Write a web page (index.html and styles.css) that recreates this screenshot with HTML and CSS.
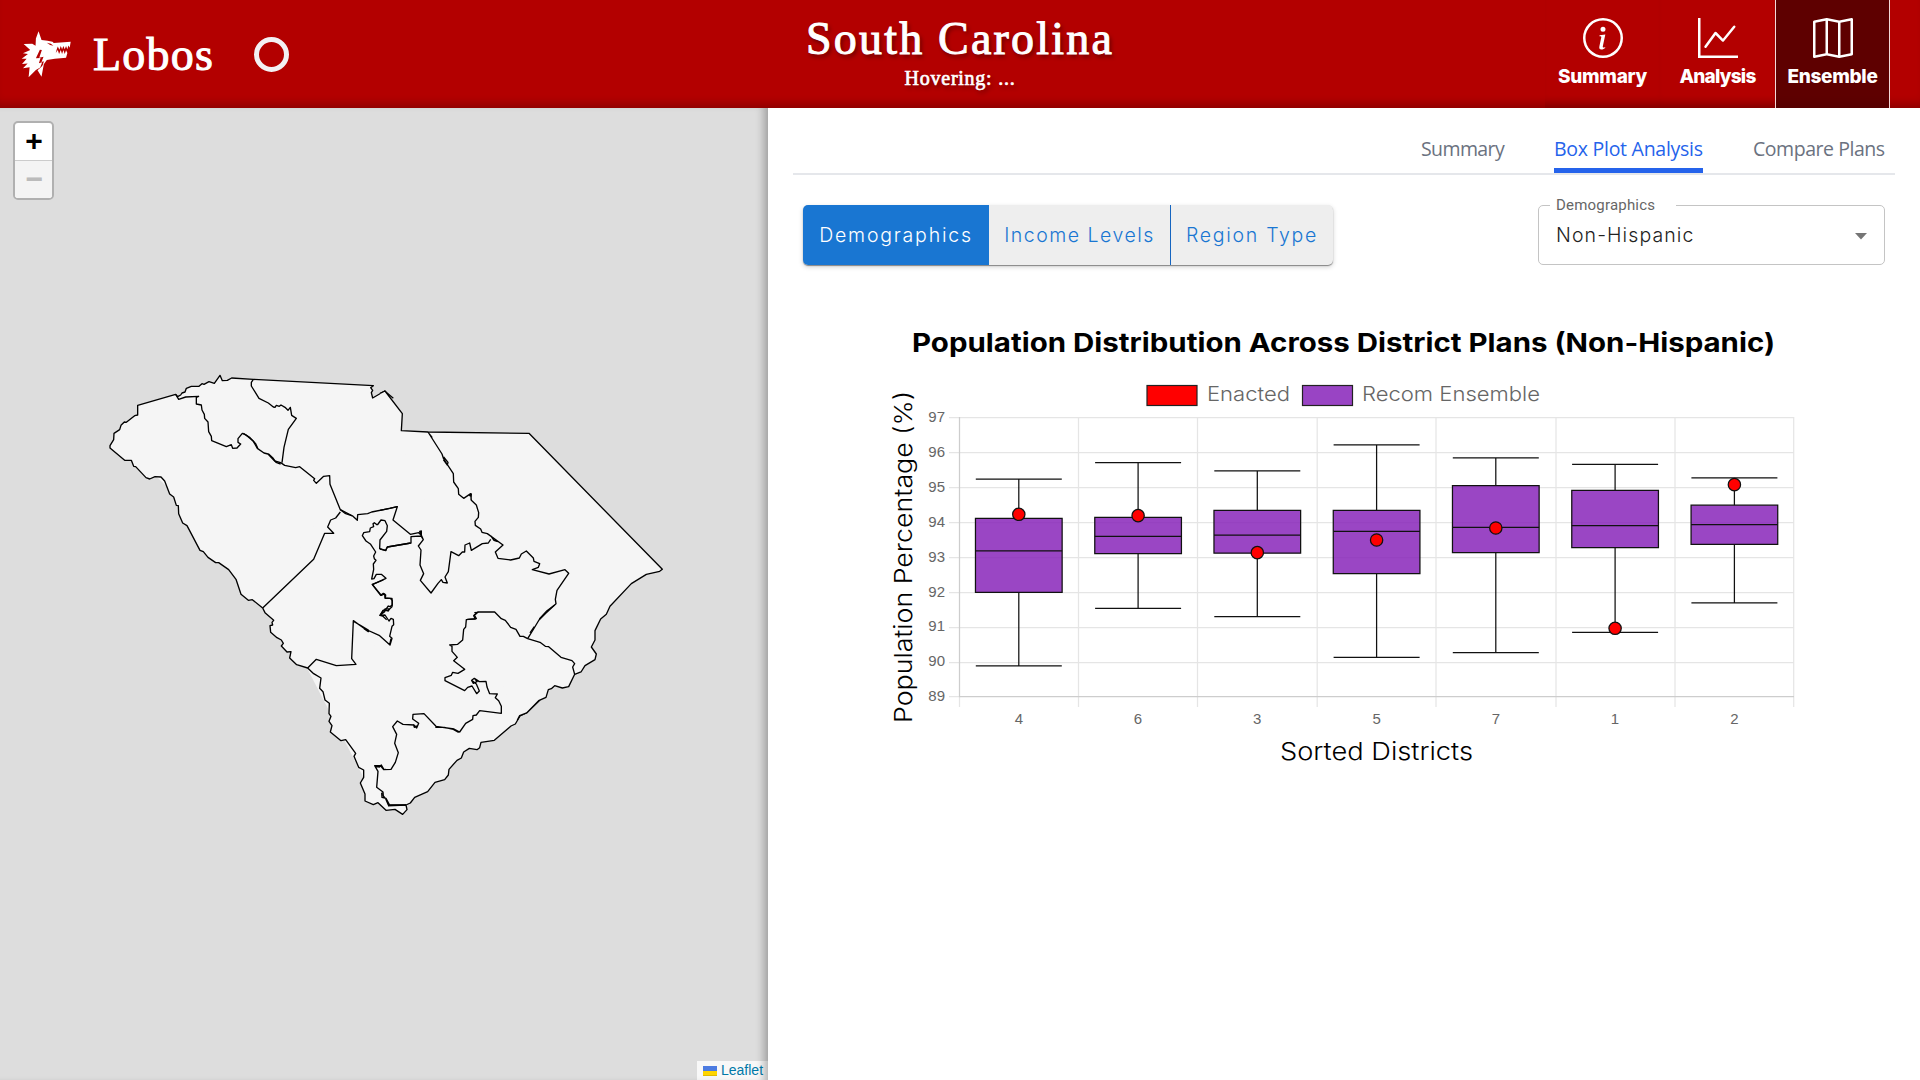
FILE: index.html
```html
<!DOCTYPE html>
<html lang="en">
<head>
<meta charset="utf-8">
<title>Lobos</title>
<link rel="stylesheet" href="styles.css">
</head>
<body>
<header class="header">
  <div class="brand">
    <svg class="wolf" viewBox="60 88 160 150" fill="#fff"><path d="M116 94L125 121L143 123L158 126L162 130L213 126L210 144L206 137L203 149L199 139L195 149L191 139L187 149L183 139L179 150L174 140L171 149L168 160L174 151L178 163L183 151L187 163L191 151L195 163L199 152L203 160L199 174L165 177L141 181L128 199L132 185L125 187L131 171L118 174L126 151L120 150L108 176L122 175L117 191L127 188L121 204L108 211L86 233L89 203L69 206L83 192L66 193L80 177L65 177L84 163L69 161L91 151L71 133L97 132L107 138L108 116Z"/><path d="M132 193L125 232L113 212L124 202Z"/><path d="M141 129L153 132L161 138L151 136Z" fill="#b30000"/></svg>
    <span class="brand-name">Lobos</span>
    <span class="ring"></span>
  </div>
  <div class="heading">
    <h1>South Carolina</h1>
    <p>Hovering: ...</p>
  </div>
  <nav class="nav">
    <a class="nav-item"><svg viewBox="0 0 16 16"><path d="M8 15A7 7 0 1 1 8 1a7 7 0 0 1 0 14m0 1A8 8 0 1 0 8 0a8 8 0 0 0 0 16"/><path d="m8.93 6.588-2.29.287-.082.38.45.083c.294.07.352.176.288.469l-.738 3.468c-.194.897.105 1.319.808 1.319.545 0 1.178-.252 1.465-.598l.088-.416c-.2.176-.492.246-.686.246-.275 0-.375-.193-.304-.533zM9 4.5a1 1 0 1 1-2 0 1 1 0 0 1 2 0"/></svg><span class="l-sum">Summary</span></a>
    <a class="nav-item"><svg viewBox="0 0 16 16"><path fill-rule="evenodd" d="M0 0h1v15h15v1H0zm14.817 3.113a.5.5 0 0 1 .07.704l-4.5 5.5a.5.5 0 0 1-.74.037L7.06 6.767l-3.656 5.027a.5.5 0 0 1-.808-.588l4-5.5a.5.5 0 0 1 .758-.06l2.609 2.61 4.15-5.073a.5.5 0 0 1 .704-.07"/></svg><span class="l-ana">Analysis</span></a>
    <a class="nav-item active"><svg viewBox="0 0 16 16"><path fill-rule="evenodd" d="M15.817.113A.5.5 0 0 1 16 .5v14a.5.5 0 0 1-.402.49l-5 1a.5.5 0 0 1-.196 0L5.5 15.01l-4.902.98A.5.5 0 0 1 0 15.5v-14a.5.5 0 0 1 .402-.49l5-1a.5.5 0 0 1 .196 0L10.5.99l4.902-.98a.5.5 0 0 1 .415.103M10 1.91l-4-.8v12.98l4 .8zm1 12.98 4-.8V1.11l-4 .8zm-6-.8V1.11l-4 .8v12.98z"/></svg><span class="l-ens">Ensemble</span></a>
  </nav>
</header>
<main class="main">
  <section class="map">
    <svg class="districts" viewBox="0 108 768 972" width="768" height="972">
      <path class="land" d="M120 440L250 385L380 400L410 440L525 440L640 570L570 655L420 770L370 790L307 668L262 607L240 560Z"/>
      <!-- coast and state outline -->
      <g transform="translate(240 580) scale(.33333)">
        <path class="area" d="M68 84L75 98L101 121L96 127L98 135L90 137L92 157L111 173L124 180L130 190L124 198L141 216L153 215L149 234L170 254L203 264L221 281L243 294L239 325L249 335L255 360L268 370L267 401L273 409L267 424L276 437L271 456L303 482L317 479L347 520L342 529L356 562L371 570L371 592L361 609L375 642L375 663L400 674L414 668L438 691L465 688L488 703L501 689L498 675L511 669L524 652L563 635L585 607L614 599L625 585L627 568L651 541L664 534L671 516L688 505L711 509L719 503L723 487L763 481L813 438L826 432L840 408L859 399L900 360"/>
      </g>
      <g transform="translate(90 360) scale(.33333)">
        <path class="area" d="M910 115L884 93L848 114L844 98L848 91L842 83L850 77L490 58L425 54L412 61L397 62L390 46L373 70L357 65L342 73L336 71L327 79L304 79L289 85L285 96L276 99L272 105L263 110L257 103L143 136L143 165L134 167L109 187L103 186L93 196L89 209L72 220L71 239L60 257L60 264L104 301L124 301L131 319L137 320L168 353L179 357L195 350L213 351L224 363L239 402L251 411L259 436L265 437L266 461L278 489L291 497L330 571L340 575L354 592L377 608L386 608L416 629L438 658L453 703L475 721L487 719L518 744"/>
      </g>
      <g transform="translate(380 360) scale(.33333)">
        <path class="area" d="M0 100L15 93L67 161L64 212L144 216L447 220L847 628L839 634L799 643L754 671L690 739L679 763L662 777L645 812L645 840L634 861L649 882L645 899L615 917L603 936L584 943L566 980L547 984L524 977L514 986L505 989L498 1012L476 1022L440 1059L419 1067L412 1080"/>
      </g>
      <!-- north-west districts -->
      <g transform="translate(90 360) scale(.33333)">
        <path class="border" d="M257 103L266 118L287 111L326 109L319 112L319 132L334 135L336 150L343 163L344 175L354 186L356 215L364 229L365 242L409 260L424 254L428 265L441 264L452 252L444 247L444 236L457 220L468 225L490 244L502 265L522 279L534 282L554 303L572 308L584 316L617 323L629 320L674 356L671 361L679 370L701 349L719 347L720 373L751 449L788 468L802 481L803 464L833 461L845 456L900 445L922 440"/>
        <path class="border" d="M490 58L484 67L484 78L507 115L535 129L550 141L555 142L559 136L568 139L573 135L585 142L594 151L601 142L605 166L619 175L595 208L582 262L576 308M535 281L548 293L558 307L572 312M460 220L480 233L497 251L503 264M751 449L765 460L787 468M751 456L737 474L722 480L713 501L731 520L704 520L671 598L518 744"/>
        <path class="border" d="M862 495L853 488L849 491L851 500L841 504L839 515L821 518L817 527L828 543L842 553L857 576L851 588L853 596L858 601L850 612L851 628L845 657L852 656L859 643L874 643L888 655L847 674L872 706L880 700L887 705L886 715L906 715L907 735L900 740L895 738L887 749L879 751L870 766L878 768L890 779M862 495L873 480L885 482L892 497L890 514L870 540L869 566L887 572L892 561L962 549"/>
      </g>
      <!-- eastern districts -->
      <g transform="translate(380 360) scale(.33333)">
        <path class="border" d="M144 216L186 282L191 297L220 341L221 366L235 386L236 403L251 415L272 401L274 421L289 435L296 458L295 472L285 484L286 496L302 507L306 517L322 521L369 555L346 576L354 595L392 600L418 594L424 582L439 573L460 594L462 604L479 611L475 622L457 629L507 642L555 629L566 640L531 691L526 718L528 731L498 759L477 780L459 810L443 836M148 222L157 233M191 291L204 307L202 315L190 299M268 408L274 402L273 419M333 528L342 541L353 545M332 538L325 549L307 551L274 571L269 549L255 555L254 576L247 576L236 587L213 575L205 635L195 651L202 669L189 667L184 659L174 670L153 699L121 661L131 641L120 615L123 570L115 558L130 539L119 514L124 513L124 526L116 518L91 523L39 480L52 440L0 451M130 539L123 528L93 530L93 549L22 561L17 571L0 567"/>
        <path class="border" d="M443 836L430 829L420 829L408 808L392 802L376 781L364 776L344 756L294 756L281 767L286 777L262 778M443 836L480 847L496 859L506 860L543 892L576 902L584 911L578 921L584 943M478 777L501 752L524 735M450 819L463 800"/>
      </g>
      <!-- southern districts -->
      <g transform="translate(240 580) scale(.33333)">
        <path class="border" d="M203 264L229 238L289 257L348 253L335 236L340 122L375 147L419 167L450 195L456 175L449 169L456 139L461 134L460 118L453 115L447 123L435 105L420 106L431 91L443 92L456 80L457 62L451 55L435 54L434 42L424 46L397 13L430 0M341 124L385 150L385 155L372 146M422 104L434 95L435 87L450 86L443 95M449 195L453 176"/>
        <path class="border" d="M703 98L714 97L703 105L709 116L679 119L677 141L671 148L668 180L653 193L629 195L636 199L636 214L652 232L641 242L674 268L654 280L638 277L634 286L615 293L615 302L674 332L683 322L696 318L710 341L718 333L709 312L695 301L703 295L718 305L738 304L741 321L749 341L772 342L766 353L776 362L784 379L784 400L719 392L709 405L699 407L698 418L677 430L659 456L642 447L588 439L552 401L519 403L518 417L536 430L530 444L522 435L489 433L472 423L458 440L470 463L464 490L475 518L466 547L453 568L431 569L421 557L404 557L414 574L410 622L429 636L430 648L437 656L445 675L498 675M694 300L700 310L711 305L704 296M586 442L613 442L640 448L656 457M406 558L418 561L424 555L432 569L438 568M425 638L426 652L438 655L448 674M520 433L523 442L533 437"/>
        <path class="border base" d="M444 677L498 675"/>
      </g>
    </svg>
    <div class="zoom"><div>+</div><div class="off">−</div></div>
    <div class="attribution"><svg width="14" height="10" viewBox="0 0 14 10"><path fill="#4c7be1" d="M0 0h14v5H0z"/><path fill="#ffd500" d="M0 5h14v4H0z"/><path fill="#e0bc00" d="M0 9h14v1H0z"/></svg><span>Leaflet</span></div>
  </section>
  <section class="panel">
    <div class="tabs"><span class="tab t1">Summary</span><span class="tab t2 selected">Box Plot Analysis</span><span class="tab t3">Compare Plans</span></div>
    <div class="controls">
      <div class="group"><button class="on">Demographics</button><button class="mid">Income Levels</button><button class="last">Region Type</button></div>
      <div class="select"><span class="select-label">Demographics</span><span class="value">Non-Hispanic</span><svg width="12" height="7" viewBox="0 0 12 7"><path d="M0 0h12L6 6.5z" fill="#757575"/></svg></div>
    </div>
    <svg class="chart" viewBox="880 310 930 470" width="930" height="470">
      <text class="title" x="912" y="352" textLength="863" lengthAdjust="spacingAndGlyphs">Population Distribution Across District Plans (Non-Hispanic)</text>
      <g class="key"><rect x="1147" y="385.5" width="50" height="20" fill="#f00"/><rect x="1302.5" y="385.5" width="50" height="20" fill="#9944c4"/></g>
      <text class="legend" x="1207" y="401" textLength="83" lengthAdjust="spacingAndGlyphs">Enacted</text>
      <text class="legend" x="1362" y="401" textLength="178" lengthAdjust="spacingAndGlyphs">Recom Ensemble</text>
      <path class="grid" d="M949 417.5H1794M949 452.5H1794M949 487.5H1794M949 522.5H1794M949 557.5H1794M949 592.5H1794M949 627.5H1794M949 662.5H1794M949 696.5H1794M959.5 417V707M1078.5 417V707M1197.5 417V707M1317.2 417V707M1436 417V707M1556 417V707M1675 417V707M1793.7 417V707"/>
      <path class="grid" d="M959.5 417V697M959 696.5H1794"/>
      <g class="tick end">
        <text x="945" y="422">97</text><text x="945" y="457">96</text><text x="945" y="492">95</text><text x="945" y="527">94</text><text x="945" y="562">93</text><text x="945" y="597">92</text><text x="945" y="631">91</text><text x="945" y="666">90</text><text x="945" y="701">89</text>
      </g>
      <g class="tick center">
        <text x="1018.8" y="724">4</text><text x="1138" y="724">6</text><text x="1257.2" y="724">3</text><text x="1376.6" y="724">5</text><text x="1495.8" y="724">7</text><text x="1615" y="724">1</text><text x="1734.4" y="724">2</text>
      </g>
      <text class="axis" x="1280" y="760" textLength="193" lengthAdjust="spacingAndGlyphs">Sorted Districts</text>
      <text class="axis" transform="translate(912 723) rotate(-90)" textLength="332" lengthAdjust="spacingAndGlyphs">Population Percentage (%)</text>
      <g class="plot">
        <g transform="translate(1018.8 370) scale(.33333)"><path d="M-129 327.5H129M0 327.5V445M0 667V888M-129 888H129"/><path class="box" d="M-130 445H130V667H-130Z"/><path d="M-130 543H130"/><circle cy="433" r="18.5"/></g>
        <g transform="translate(1138.1 370) scale(.33333)"><path d="M-129 278H129M0 278V442M0 551V715M-129 715H129"/><path class="box" d="M-130 442H130V551H-130Z"/><path d="M-130 499H130"/><circle cy="437" r="18.5"/></g>
        <g transform="translate(1257.3 370) scale(.33333)"><path d="M-129 303H129M0 303V421.5M0 549.5V740M-129 740H129"/><path class="box" d="M-130 421.5H130V549.5H-130Z"/><path d="M-130 495.5H130"/><circle cy="548" r="18.5"/></g>
        <g transform="translate(1376.6 370) scale(.33333)"><path d="M-129 224.5H129M0 224.5V421.5M0 611V862M-129 862H129"/><path class="box" d="M-130 421.5H130V611H-130Z"/><path d="M-130 484.5H130"/><circle cy="510" r="18.5"/></g>
        <g transform="translate(1495.8 370) scale(.33333)"><path d="M-129 264H129M0 264V347M0 548V848M-129 848H129"/><path class="box" d="M-130 347H130V548H-130Z"/><path d="M-130 472H130"/><circle cy="474" r="18.5"/></g>
        <g transform="translate(1615.1 370) scale(.33333)"><path d="M-129 283.5H129M0 283.5V361M0 533V787M-129 787H129"/><path class="box" d="M-130 361H130V533H-130Z"/><path d="M-130 467H130"/><circle cy="775" r="18.5"/></g>
        <g transform="translate(1734.4 370) scale(.33333)"><path d="M-129 323.5H129M0 323.5V405.5M0 523V699M-129 699H129"/><path class="box" d="M-130 405.5H130V523H-130Z"/><path d="M-130 464H130"/><circle cy="344" r="18.5"/></g>
      </g>
    </svg>
  </section>
</main>
</body>
</html>
```
FILE: styles.css
```css
* { box-sizing: border-box; }
body { margin: 0; width: 1920px; height: 1080px; overflow: hidden; background: #fff; font-family: Inter, sans-serif; }
.header { display: grid; grid-template-columns: 1fr 400px 1fr; height: 108px; background: #b30000; color: #fff; box-shadow: inset 0 -10px 10px -6px rgba(0,0,0,.22); }
.brand { display: flex; align-items: center; padding-left: 20px; font-family: "Liberation Serif", serif; }
.wolf { width: 53px; height: 50px; }
.brand-name { margin: 2px 0 0 20px; width: 119px; font-size: 46px; line-height: 50px; letter-spacing: 1.2px; -webkit-text-stroke: 1px #fff; }
.ring { width: 35px; height: 35px; margin-left: 42px; border: 5px solid #f3f0f3; border-radius: 50%; }
.heading { display: flex; flex-direction: column; align-items: center; padding-top: 12px; font-family: "Liberation Serif", serif; text-shadow: 2px 3px 4px rgba(0,0,0,.45); }
.heading h1 { margin: 0; font-size: 46px; line-height: 54px; font-weight: 400; letter-spacing: 2.2px; -webkit-text-stroke: 1px #fff; white-space: nowrap; }
.heading p { margin: 0; font-size: 20px; line-height: 24px; letter-spacing: .75px; -webkit-text-stroke: .7px #fff; }
.nav { display: flex; justify-content: flex-end; padding-right: 30px; }
.nav-item { display: flex; flex-direction: column; align-items: center; width: 115px; height: 108px; padding-top: 18px; font-size: 19px; font-weight: 800; line-height: 24px; box-shadow: inset 0 -10px 10px -6px rgba(0,0,0,.1); }
.nav-item svg { width: 40px; height: 40px; fill: #fff; margin-bottom: 7px; }
.nav-item.active { background: #5e0000; border-left: 1px solid #f3d8d8; border-right: 1px solid #f3d8d8; }
.l-sum { letter-spacing: -.3px; }
.l-ana { letter-spacing: -.8px; }
.l-ens { letter-spacing: -.3px; }
.main { display: flex; height: 972px; }
.map { position: relative; width: 768px; background: #ddd; overflow: hidden; }
.map::after { content: ""; position: absolute; inset: 0; pointer-events: none; box-shadow: inset -9px 0 8px -5px rgba(0,0,0,.28); }
.districts { display: block; }
.land { fill: #f5f5f5; }
.area { fill: #f5f5f5; stroke: #000; stroke-width: 4; stroke-linejoin: round; }
.border { fill: none; stroke: #000; stroke-width: 4; stroke-linejoin: round; }
.base { stroke-width: 5; }
.zoom { position: absolute; left: 13px; top: 13px; width: 41px; height: 79px; border: 2px solid #b0b0b0; border-radius: 5px; background: #fff; overflow: hidden; font: bold 30px/40px "Liberation Mono", monospace; text-align: center; }
.zoom div { height: 37px; padding-left: 1px; }
.zoom .off { height: 38px; border-top: 1px solid #ccc; background: #f4f4f4; color: #bbb; }
.attribution { position: absolute; right: 0; bottom: 0; display: flex; align-items: center; gap: 4px; width: 71px; height: 19px; padding-left: 6px; background: rgba(255,255,255,.8); color: #0078a8; font: 14px/19px "Liberation Sans", sans-serif; }
.panel { width: 1152px; padding: 0 25px; }
.tabs { display: flex; justify-content: flex-end; gap: 50px; height: 67px; padding: 25px 10px 0 0; border-bottom: 2px solid #e5e7eb; font: 19.5px/32px "Open Sans", "Noto Sans", sans-serif; color: #6b7280; }
.tab { height: 40px; white-space: nowrap; }
.t1 { width: 83px; letter-spacing: -.6px; }
.t2 { width: 149px; letter-spacing: -.27px; }
.t3 { width: 132px; letter-spacing: -.45px; }
.selected { color: #2563eb; border-bottom: 5px solid #2563eb; }
.controls { display: flex; justify-content: space-between; padding: 30px 10px 0; }
.group { display: flex; width: 530px; height: 60px; border-radius: 5px; background: #eee; box-shadow: 0 1px 1px rgba(0,0,0,.4), 0 2px 5px rgba(0,0,0,.18); }
.group button { padding: 0; border: 0; background: none; color: #1976d2; font: 300 19.5px/24px Inter, sans-serif; }
.group .on { width: 186px; border-radius: 5px 0 0 5px; background: #1976d2; color: #fff; letter-spacing: 1.8px; }
.group .mid { width: 182px; border-right: 1px solid #1565c0; letter-spacing: 1.5px; }
.group .last { flex: 1; letter-spacing: 1.7px; }
.select { position: relative; display: flex; align-items: center; justify-content: space-between; width: 347px; height: 60px; padding: 0 17px; border: 1px solid #c4c4c4; border-radius: 5px; color: #222; font: 300 19.5px/24px Inter, sans-serif; letter-spacing: 1.1px; }
.select svg { margin-top: 2px; }
.select-label { position: absolute; left: 11px; top: -11px; width: 126px; padding-left: 6px; background: #fff; color: #666; font: 15px/20px Roboto, sans-serif; letter-spacing: .2px; }
.chart { display: block; margin: 45px 0 0 87px; }
.title { font: 700 26px Inter, sans-serif; fill: #000; }
.key rect { stroke: #222; stroke-width: 1.2; }
.legend { font: 300 20px Inter, sans-serif; fill: #666; }
.axis { font: 300 24px Inter, sans-serif; fill: #000; }
.tick { font: 15px "Liberation Sans", sans-serif; fill: #666; }
.end { text-anchor: end; }
.center { text-anchor: middle; }
.grid { fill: none; stroke: rgba(0,0,0,.1); stroke-width: 1.25; }
.plot path { fill: none; stroke: #111; stroke-width: 3.75; }
.plot .box { fill: rgba(136,38,186,.85); }
.plot circle { fill: #f00; stroke: #111; stroke-width: 3.75; }
```
